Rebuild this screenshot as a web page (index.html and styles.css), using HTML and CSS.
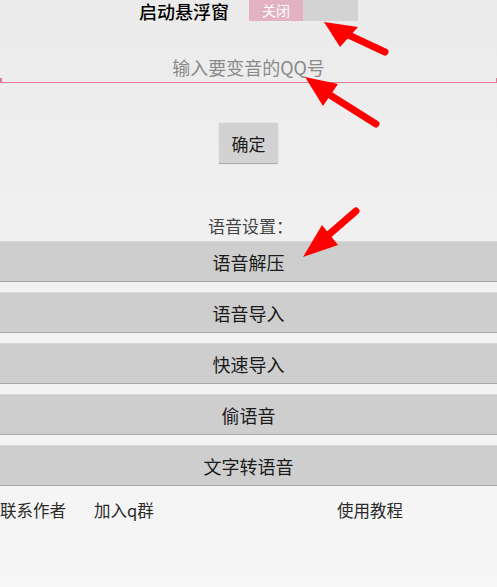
FILE: index.html
```html
<!DOCTYPE html>
<html lang="zh-CN">
<head>
<meta charset="utf-8">
<title>变音</title>
<link rel="stylesheet" href="styles.css">
</head>
<body>
<div class="page">
  <div class="top-row">
    <span class="float-label">启动悬浮窗</span>
    <div class="toggle">
      <span class="toggle-off">关闭</span>
      <span class="toggle-track"></span>
    </div>
  </div>
  <div class="field">
    <span class="placeholder">输入要变音的QQ号</span>
  </div>
  <div class="ok-wrap">
    <button class="ok-btn">确定</button>
  </div>
  <div class="section-label">语音设置：</div>
  <div class="actions">
    <button class="wide-btn">语音解压</button>
    <button class="wide-btn">语音导入</button>
    <button class="wide-btn">快速导入</button>
    <button class="wide-btn">偷语音</button>
    <button class="wide-btn">文字转语音</button>
  </div>
  <div class="footer">
    <span class="link">联系作者</span>
    <span class="link link-group">加入q群</span>
    <span class="link link-help">使用教程</span>
  </div>
  <svg class="arrows" width="497" height="587" viewBox="0 0 497 587">
    <g stroke="#ff0000" stroke-width="7" stroke-linecap="round" fill="none">
      <line x1="385" y1="52" x2="340" y2="31"/>
      <line x1="376" y1="124" x2="322" y2="90"/>
      <line x1="356" y1="211" x2="318" y2="244"/>
    </g>
    <g fill="#ff0000">
      <polygon points="324,22 358,27 340,47"/>
      <polygon points="305,77 338,84 323,106"/>
      <polygon points="303,257 322,225 338,245"/>
    </g>
  </svg>
</div>
</body>
</html>
```
FILE: styles.css
```css
html, body {
  margin: 0;
  padding: 0;
}
body {
  width: 497px;
  height: 587px;
  background: linear-gradient(#ebebeb, #f3f3f3 60%, #f6f6f6);
  font-family: "Noto Sans CJK SC", "Noto Sans", sans-serif;
  color: #1a1a1a;
  overflow: hidden;
}
.page {
  position: relative;
  width: 497px;
  height: 587px;
  display: flex;
  flex-direction: column;
}
.top-row {
  height: 22px;
  display: flex;
  justify-content: center;
  align-items: flex-start;
  gap: 20px;
}
.float-label {
  font-size: 18px;
  line-height: 22px;
  color: #000;
  font-weight: 500;
}
.toggle {
  display: flex;
  width: 109px;
  height: 21px;
  background: #d3d3d3;
}
.toggle-off {
  width: 54px;
  background: #e2b2c3;
  color: #fff;
  font-size: 14px;
  line-height: 21px;
  text-align: center;
}
.toggle-track {
  flex: 1;
}
.field {
  position: relative;
  padding-top: 33px;
  padding-bottom: 3px;
  border-bottom: 1.5px solid #e07994;
  text-align: center;
}
.field::before,
.field::after {
  content: "";
  position: absolute;
  bottom: 0;
  width: 1.5px;
  height: 4px;
  background: #e07994;
}
.field::before { left: 0; }
.field::after { right: 0; }
.placeholder {
  display: block;
  font-size: 18px;
  line-height: 24px;
  color: #8a8a8a;
}
.ok-wrap {
  display: flex;
  justify-content: center;
  margin-top: 40px;
}
.ok-btn {
  width: 59px;
  height: 41px;
  padding: 0;
  border: none;
  border-bottom: 1.5px solid #a9a9a9;
  background: #d2d2d2;
  font-family: inherit;
  font-size: 17px;
  color: #1a1a1a;
  box-shadow: 0 0 1px rgba(0,0,0,0.15);
}
.section-label {
  margin-top: 51px;
  text-align: center;
  font-size: 17px;
  line-height: 22px;
  color: #444;
  padding-left: 4px;
}
.actions {
  display: flex;
  flex-direction: column;
  gap: 10px;
  margin-top: 4px;
}
.wide-btn {
  height: 41px;
  width: 497px;
  padding: 0;
  border: none;
  border-top: 1px solid #d8d8d8;
  border-bottom: 1.5px solid #a8a8a8;
  background: #cecece;
  font-family: inherit;
  font-size: 18px;
  color: #1a1a1a;
}
.footer {
  display: flex;
  margin-top: 12px;
  font-size: 16.5px;
  line-height: 24px;
  color: #2a2a2a;
}
.link-group {
  margin-left: 28px;
}
.link-help {
  margin-left: auto;
  margin-right: 94px;
}
.arrows {
  position: absolute;
  left: 0;
  top: 0;
  pointer-events: none;
}
```
